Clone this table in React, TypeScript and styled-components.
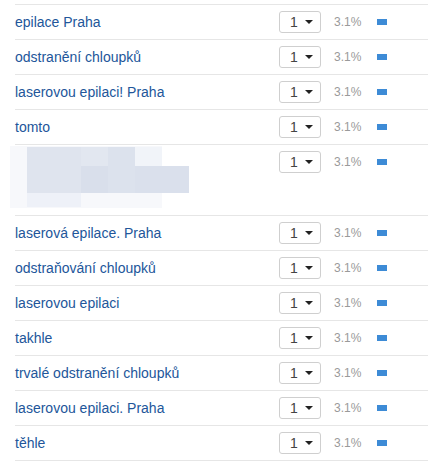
import React from "react";
import styled, { createGlobalStyle } from "styled-components";

const Global = createGlobalStyle`
  html, body { margin: 0; padding: 0; background: #fff; }
  body { font-family: "Liberation Sans", Arial, sans-serif; }
`;

const Page = styled.div`
  padding-top: 4px;
  padding-left: 15px;
  width: 428px;
  box-sizing: border-box;
`;

const Table = styled.div`
  border-top: 1px solid #e6e6e6;
`;

const Row = styled.div<{ $tall?: boolean }>`
  display: grid;
  grid-template-columns: 264px 42px 56px 11px 1fr;
  height: ${(p) => (p.$tall ? 70 : 34)}px;
  border-bottom: 1px solid #e6e6e6;
  align-items: start;
`;

const Keyword = styled.div`
  color: #22569a;
  font-size: 14px;
  line-height: 34px;
  white-space: nowrap;
`;

const Select = styled.div`
  margin-top: 6px;
  height: 22px;
  box-sizing: border-box;
  border: 1px solid #cfcfcf;
  border-radius: 3px;
  display: flex;
  align-items: center;
  padding-left: 10px;
  gap: 7px;
  font-size: 14px;
  color: #444;
  background: #fff;
`;

const Caret = styled.span`
  width: 0;
  height: 0;
  border-left: 4px solid transparent;
  border-right: 4px solid transparent;
  border-top: 4px solid #222;
`;

const Percent = styled.div`
  padding-left: 13px;
  font-size: 12px;
  line-height: 34px;
  color: #9a9a9a;
`;

const Bar = styled.div`
  margin-top: 14px;
  width: 10px;
  height: 6px;
  background: #3d8bd6;
`;

const Redacted = styled.svg`
  display: block;
  margin-left: -5px;
  margin-top: 1px;
`;

const Blur = () => (
  <Redacted width="180" height="62" viewBox="0 0 180 62">
    <rect x="0" y="0" width="152" height="62" fill="#f7f8fb" />
    <rect x="17" y="1" width="54" height="46" fill="#dfe4ee" />
    <rect x="71" y="1" width="27" height="46" fill="#e2e7f0" />
    <rect x="98" y="1" width="27" height="46" fill="#dce2ed" />
    <rect x="71" y="20" width="27" height="27" fill="#d9dfeb" />
    <rect x="125" y="1" width="27" height="19" fill="#f1f4f9" />
    <rect x="125" y="20" width="54" height="27" fill="#dae0ec" />
    <rect x="17" y="47" width="54" height="14" fill="#eef1f8" />
  </Redacted>
);

const rows: { text?: string; tall?: boolean }[] = [
  { text: "epilace Praha" },
  { text: "odstranění chloupků" },
  { text: "laserovou epilaci! Praha" },
  { text: "tomto" },
  { tall: true },
  { text: "laserová epilace. Praha" },
  { text: "odstraňování chloupků" },
  { text: "laserovou epilaci" },
  { text: "takhle" },
  { text: "trvalé odstranění chloupků" },
  { text: "laserovou epilaci. Praha" },
  { text: "těhle" },
];

export default function App() {
  return (
    <>
      <Global />
      <Page>
        <Table>
          {rows.map((r, i) => (
            <Row key={i} $tall={r.tall}>
              {r.tall ? <Blur /> : <Keyword>{r.text}</Keyword>}
              <Select>
                1<Caret />
              </Select>
              <Percent>3.1%</Percent>
              <Bar />
              <div />
            </Row>
          ))}
        </Table>
      </Page>
    </>
  );
}
